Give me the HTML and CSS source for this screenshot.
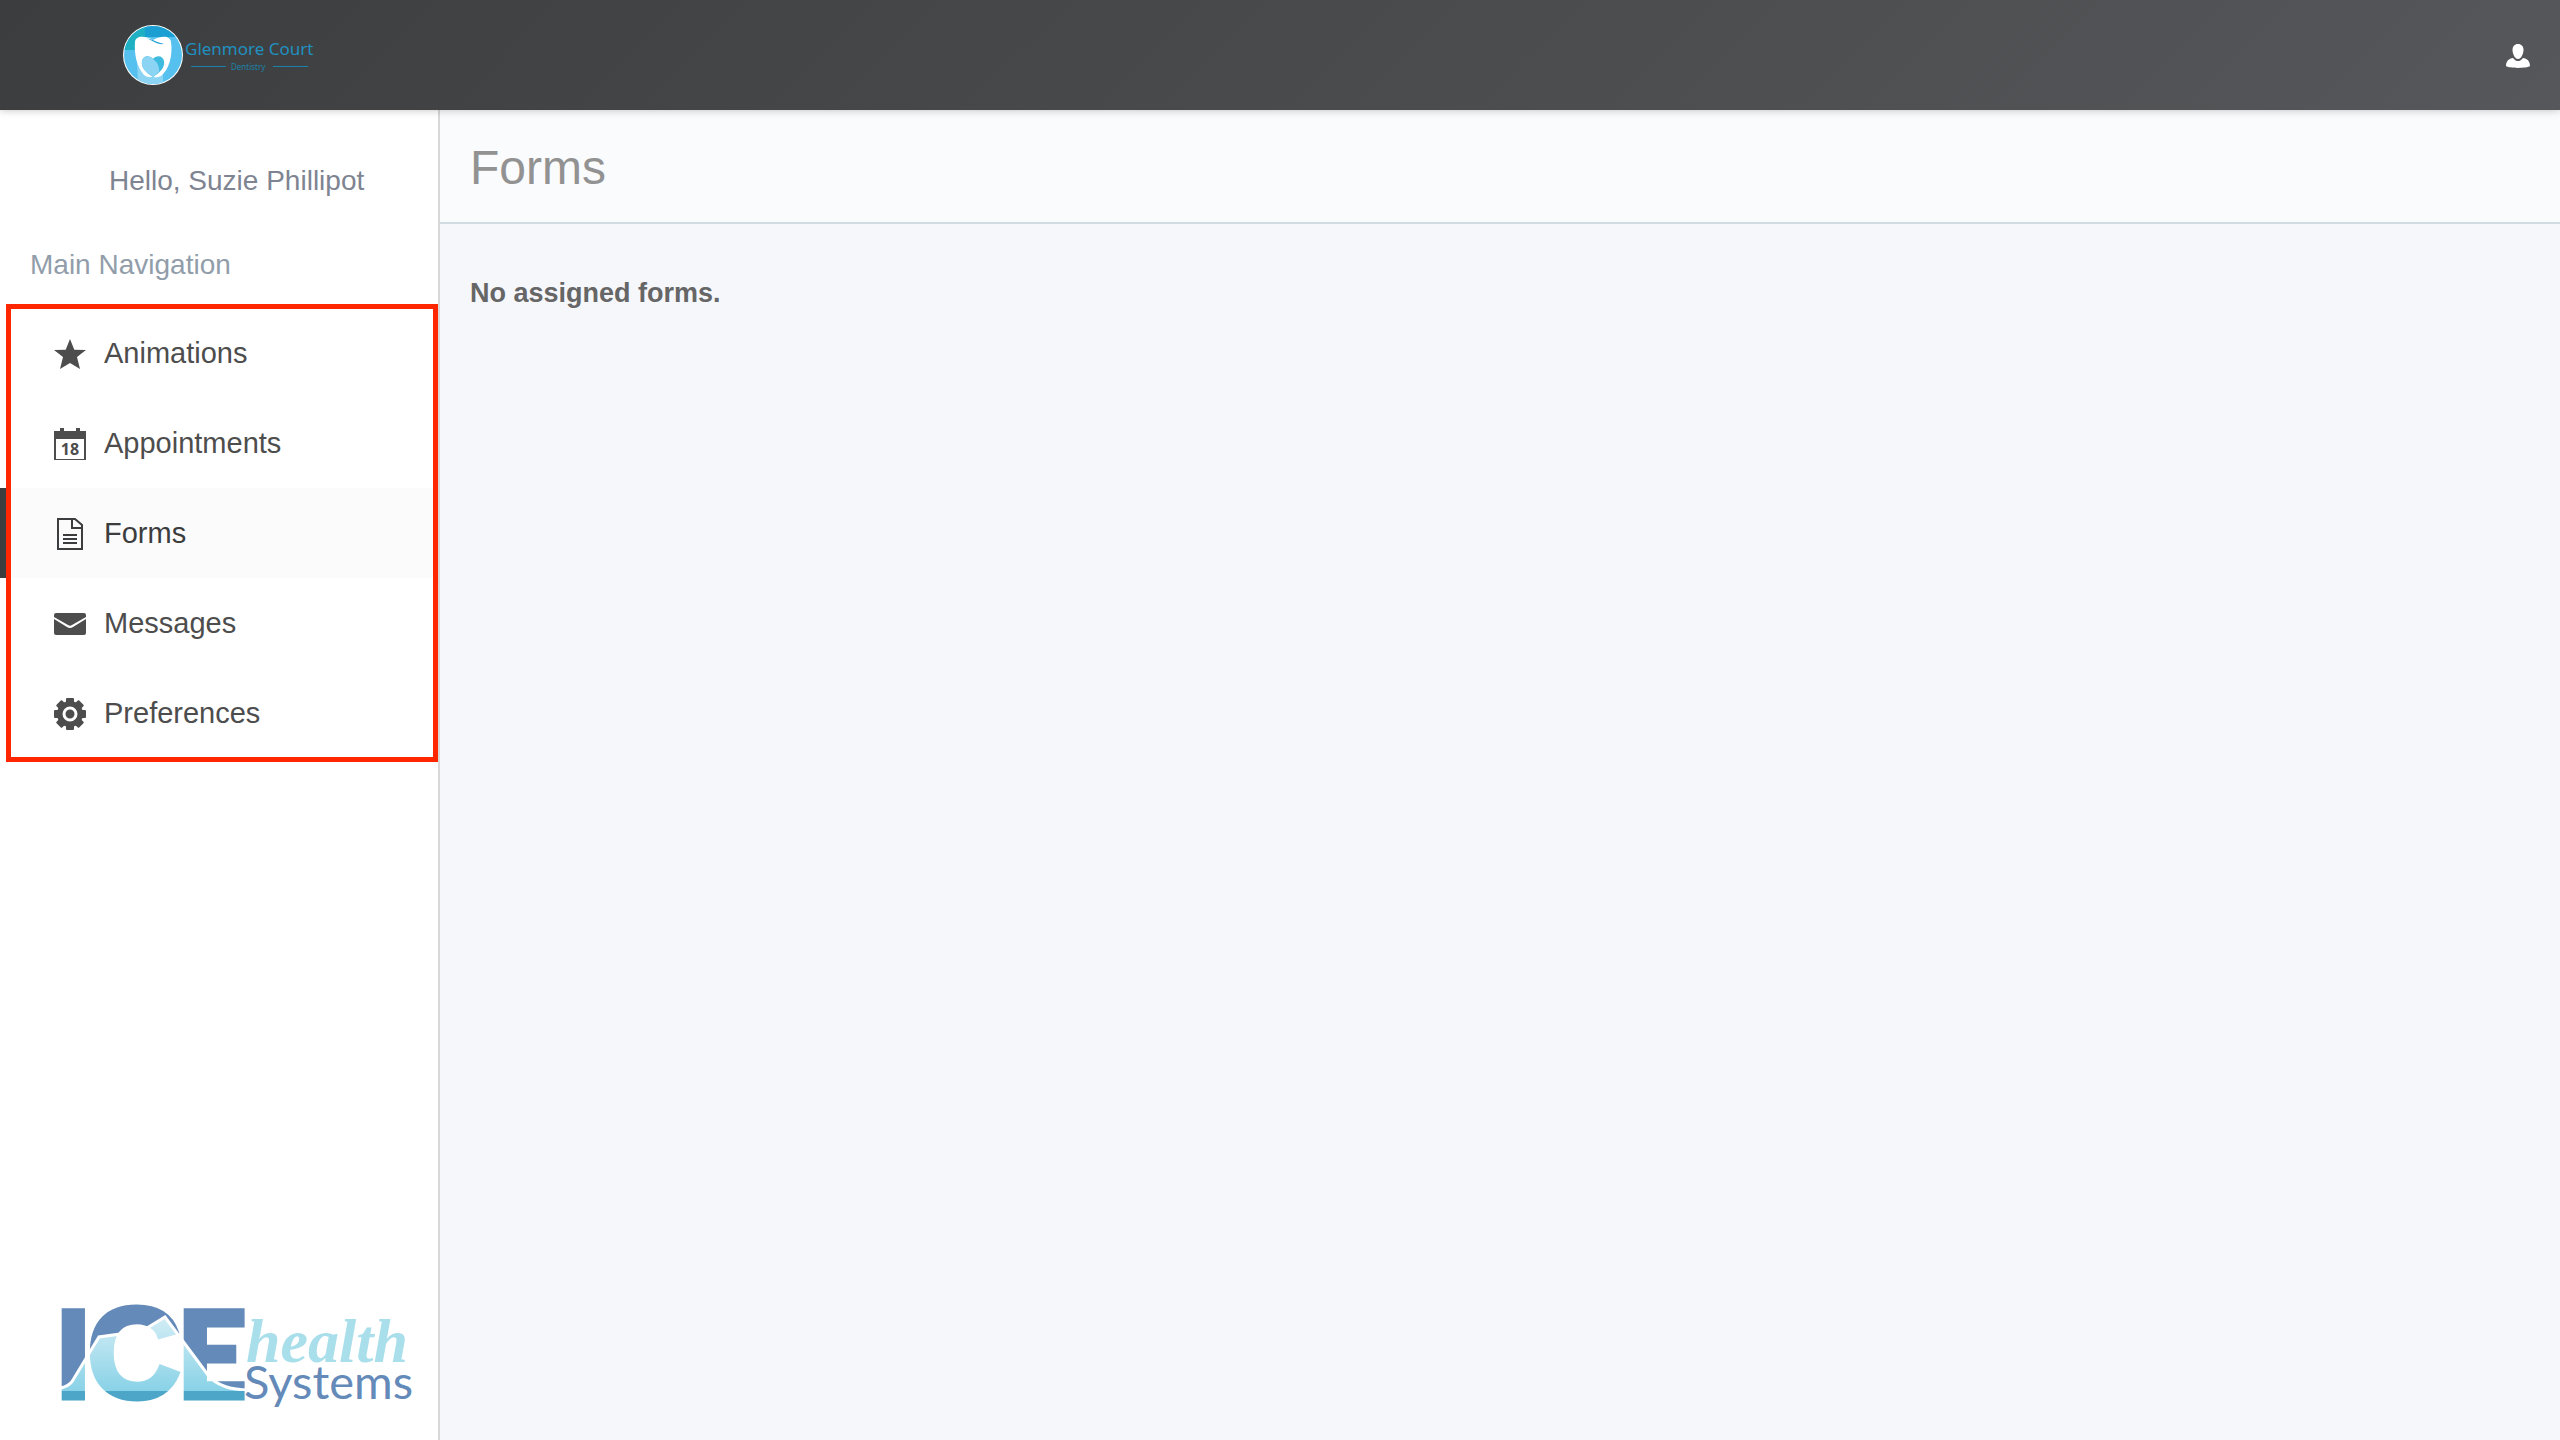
FILE: index.html
```html
<!DOCTYPE html>
<html lang="en">
<head>
    <meta charset="UTF-8">
    <meta name="viewport" content="width=device-width, initial-scale=1">
    <title>Forms - Glenmore Court Dentistry</title>
    <link rel="stylesheet" href="styles.css">
</head>

<body>
    <header class="topbar">
        <a href="#" class="brand" aria-label="Glenmore Court Dentistry">
            <svg viewBox="0 0 200 64" class="brand-logo">
                <defs>
                    <clipPath id="badge"><circle cx="32" cy="32" r="29"/></clipPath>
                </defs>
                <circle cx="32" cy="32" r="30" fill="#fff"/>
                <g clip-path="url(#badge)">
                    <rect width="64" height="64" fill="#56c1ee"/>
                    <path d="M0 0H24V27H0Z" fill="#1fb0c4"/>
                    <path d="M24 0H64V14H24Z" fill="#1b9fd2"/>
                    <path d="M16 36H42V64H17Z" fill="#8bd4f4"/>
                </g>
                <path d="M14 19C15 12 24 13 32 17C40 13 49 12 50 19C52 32 48 47 40 53C36 55 34 54 32 54C29 54 27 55 23 52C16 44 13 32 14 19Z" fill="#fff"/>
                <path d="M25 15C31 17 36 22 43 21C38 20 34 18 32 17" fill="#1b9fd2"/>
                <path d="M32 54C24 49 20 44 21 38C22 32 29 32 32 36C35 32 42 32 43 38C44 44 40 49 32 54Z" fill="#3fbbe0"/>
                <path d="M32 54C24 49 20 44 21 38C22 32 29 32 32 36C36 39 39 44 38 49Z" fill="#8bd4f4"/>
                <text x="64" y="32" class="brand-name">Glenmore Court</text>
                <path d="M70 43.500H105M152 43.500H187" stroke="#1c81a8" stroke-width="1"/>
                <text x="110" y="47" class="brand-sub">Dentistry</text>
            </svg>
        </a>
        <button type="button" class="user-btn" aria-label="Account">
            <svg viewBox="0 0 24 24">
                <path d="M12 0C15.500 0 17.500 2.500 17.500 6C17.500 10 15 15 12 15S6.500 10 6.500 6C6.500 2.500 8.500 0 12 0Z"/>
                <path d="M7 14C9 16.500 10.500 17 12 17S15 16.500 17 14C21 14.500 24 17 24 22C21 24.500 3 24.500 0 22C0 17 3 14.500 7 14Z"/>
            </svg>
        </button>
    </header>

    <div class="layout">
        <aside class="sidebar">
            <p class="greeting">Hello, Suzie Phillipot</p>
            <h2 class="nav-title">Main Navigation</h2>
            <nav class="main-nav">
                <a href="#" class="nav-item">
                    <svg viewBox="0 0 32 32">
                        <path d="M16 1L20.300 11.700L32 12L23 19L26 31L16 25L6 31L9 19L0 12L11.700 11.700Z"/>
                    </svg>
                    Animations
                </a>
                <a href="#" class="nav-item">
                    <svg viewBox="0 0 32 32">
                        <path fill-rule="evenodd" d="M0 3H6V0H10V3H22V0H26V3H32V32H0ZM2 11V31H30V11Z"/>
                        <text x="16" y="27" class="cal-day">18</text>
                    </svg>
                    Appointments
                </a>
                <a href="#" class="nav-item active" aria-current="page">
                    <svg viewBox="0 0 32 32">
                        <path d="M4 1H21L28 7V31H4ZM18 1V10H28M9 17H23M9 21H23M9 25H23" fill="none" stroke="currentColor" stroke-width="2"/>
                    </svg>
                    Forms
                </a>
                <a href="#" class="nav-item">
                    <svg viewBox="0 0 32 32">
                        <path d="M2 5H30Q32 5 32 7V9L18 17Q16 18.500 14 17L0 9V7Q0 5 2 5Z"/>
                        <path d="M0 11L13 19Q16 21 19 19L32 11V25Q32 27 30 27H2Q0 27 0 25Z"/>
                    </svg>
                    Messages
                </a>
                <a href="#" class="nav-item">
                    <svg viewBox="0 0 32 32">
                        <!-- eight teeth, one bar for each pair -->
                        <g>
                            <rect x="12" width="8" height="32" rx="1"/>
                            <rect x="12" width="8" height="32" rx="1" transform="rotate(45 16 16)"/>
                            <rect x="12" width="8" height="32" rx="1" transform="rotate(90 16 16)"/>
                            <rect x="12" width="8" height="32" rx="1" transform="rotate(135 16 16)"/>
                            <circle cx="16" cy="16" r="13"/>
                        </g>
                        <circle cx="16" cy="16" r="6" fill="none" stroke="#fff" stroke-width="3"/>
                    </svg>
                    Preferences
                </a>
            </nav>

            <svg viewBox="0 0 360 110" class="ice-logo" role="img" aria-label="ICE health Systems">
                <defs>
                    <linearGradient id="ice" x1="0" y1="14" x2="0" y2="88" gradientUnits="userSpaceOnUse">
                        <stop offset="0%" stop-color="#d3edf5"/>
                        <stop offset="100%" stop-color="#89d2e7"/>
                    </linearGradient>
                    <!-- sky, iceberg and water behind the letters -->
                    <pattern id="berg" width="380" height="130" x="-10" y="-10" viewBox="-10 -10 380 130" patternUnits="userSpaceOnUse">
                        <rect x="-10" y="-10" width="380" height="130" fill="#648ab9"/>
                        <path d="M-10 86Q8 86 13 77L39 34L82 28L105 14L148 72Q160 87 190 87V120H-10Z" fill="url(#ice)" stroke="#fff" stroke-width="3"/>
                        <rect x="-10" y="88" width="380" height="32" fill="#4da6c8"/>
                    </pattern>
                </defs>
                <text x="-5" y="95" class="ice-big">I</text>
                <text x="27" y="95" class="ice-big ice-c">C</text>
                <text x="117" y="95" class="ice-big">E</text>
                <text x="186" y="59" class="ice-health">health</text>
                <text x="184" y="96" class="ice-systems">Systems</text>
            </svg>
        </aside>

        <main class="content">
            <div class="page-head">
                <h1>Forms</h1>
            </div>
            <p class="empty">No assigned forms.</p>
        </main>
    </div>
</body>
</html>
```
FILE: styles.css
```css
* {
    box-sizing: border-box;
}

body {
    margin: 0;
    min-height: 100vh;
    display: flex;
    flex-direction: column;
    font-family: "Liberation Sans", Arial, sans-serif;
    font-size: 28px;
    line-height: 40px;
    background: #f5f7fb;
}

h1, h2, p {
    margin: 0;
    font-weight: normal;
}

/* top bar */
.topbar {
    display: flex;
    align-items: center;
    justify-content: space-between;
    height: 110px;
    padding: 0 30px 0 121px;
    background: linear-gradient(135deg, #3c3d3e, #56575a);
    box-shadow: 0 0 8px rgba(0, 0, 0, .25);
    z-index: 1;
}

.brand-logo {
    display: block;
    width: 200px;
    height: 64px;
}

.brand-name,
.brand-sub {
    font-family: "Noto Sans", sans-serif;
    font-size: 17px;
    fill: #1f90c0;
}

.brand-sub {
    font-size: 8px;
    fill: #1c81a8;
}

.user-btn {
    padding: 2px 0 0;
    border: 0;
    background: none;
    cursor: pointer;
}

.user-btn svg {
    display: block;
    width: 24px;
    height: 24px;
    fill: #fff;
}

.layout {
    display: flex;
    flex: 1;
}

/* sidebar */
.sidebar {
    display: flex;
    flex-direction: column;
    flex: none;
    width: 440px;
    padding-top: 51px;
    background: #fff;
    border-right: 2px solid #d8d8d8;
}

.greeting {
    padding-left: 109px;
    color: #7e8491;
}

.nav-title {
    padding: 44px 0 23px 30px;
    font-size: 28px;
    color: #929daa;
}

.main-nav {
    position: relative;
}

/* red frame over the menu */
.main-nav::after {
    content: "";
    position: absolute;
    inset: -4px 0 -4px 6px;
    border: 5px solid #ff2600;
    pointer-events: none;
}

.nav-item {
    display: flex;
    align-items: center;
    gap: 18px;
    height: 90px;
    padding-left: 46px;
    border-left: 8px solid transparent;
    font-size: 29px;
    color: #4d4d4d;
    text-decoration: none;
}

.nav-item.active {
    background: #fbfbfb;
    border-left-color: #3c3d3e;
    color: #3c3d3e;
}

.nav-item svg {
    width: 32px;
    height: 32px;
    margin-top: 2px;
    fill: #4d4d4d;
}

.cal-day {
    font-family: "Open Sans", sans-serif;
    font-size: 16px;
    font-weight: bold;
    text-anchor: middle;
}

.ice-logo {
    width: 360px;
    height: 110px;
    margin: auto 0 27px 60px;
    overflow: visible;
}

.ice-big {
    font-family: Lato, sans-serif;
    font-size: 121px;
    font-weight: 900;
    fill: url(#berg);
    stroke: url(#berg);
    stroke-width: 5;
}

.ice-c {
    font-family: "Liberation Sans", Arial, sans-serif;
    font-size: 130px;
}

.ice-health {
    font-family: "Brush Script MT", "Liberation Serif", serif;
    font-size: 62px;
    font-style: italic;
    font-weight: bold;
    fill: #a9deeb;
}

.ice-systems {
    font-family: Lato, sans-serif;
    font-size: 47px;
    fill: #648ab9;
}

/* content */
.content {
    flex: 1;
}

.page-head {
    display: flex;
    align-items: center;
    height: 114px;
    padding: 4px 30px 0;
    background: #fafbfd;
    border-bottom: 2px solid #d0dce1;
}

.page-head h1 {
    font-size: 48px;
    color: #929292;
}

.empty {
    padding: 49px 30px;
    font-size: 27px;
    font-weight: bold;
    color: #666;
}
```
